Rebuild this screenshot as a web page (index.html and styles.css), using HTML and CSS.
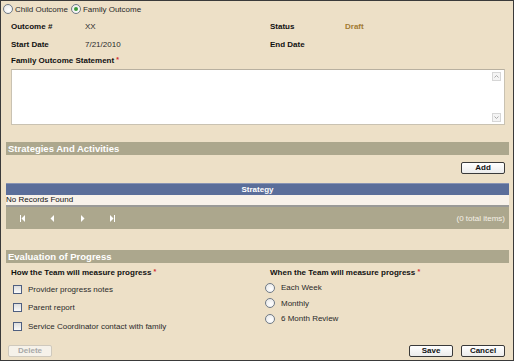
FILE: index.html
```html
<!DOCTYPE html>
<html lang="en">
<head>
  <meta charset="UTF-8" />
  <title>Family Outcome</title>
  <link rel="stylesheet" href="styles.css">
</head>
<body>

<div class="page">
  <div class="type-row">
    <span class="radio"></span><span class="opt">Child Outcome</span>
    <span class="radio on"></span><span class="opt">Family Outcome</span>
  </div>

  <div class="fields">
    <span class="lbl">Outcome #</span><span class="val">XX</span>
    <span class="lbl">Status</span><span class="val draft">Draft</span>
    <span class="lbl">Start Date</span><span class="val">7/21/2010</span>
    <span class="lbl">End Date</span><span class="val"></span>
  </div>

  <div class="lbl stmt">Family Outcome Statement <span class="req">*</span></div>
  <div class="textarea">
    <div class="scroll">
      <svg class="arrow" width="9" height="9" viewBox="0 0 9 9"><rect x="0.5" y="0.5" width="8" height="8" fill="#f4f4f4" stroke="#d6d6d6"/><path d="M2.5 5.5 L4.5 3.5 L6.5 5.5" fill="none" stroke="#aaa"/></svg>
      <svg class="arrow" width="9" height="9" viewBox="0 0 9 9"><rect x="0.5" y="0.5" width="8" height="8" fill="#f4f4f4" stroke="#d6d6d6"/><path d="M2.5 3.5 L4.5 5.5 L6.5 3.5" fill="none" stroke="#aaa"/></svg>
    </div>
  </div>

  <div class="section-head">Strategies And Activities</div>
  <div class="add-row"><button class="btn">Add</button></div>

  <div class="grid">
    <div class="grid-head">Strategy</div>
    <div class="grid-row">No Records Found</div>
    <div class="pager">
      <div class="pager-btns">
        <svg width="7" height="7" viewBox="0 0 7 7"><rect x="1" y="0" width="1" height="7" fill="#fff"/><path d="M6 0 L2.5 3.5 L6 7 Z" fill="#fff"/></svg>
        <svg width="7" height="7" viewBox="0 0 7 7"><path d="M5 0 L1.5 3.5 L5 7 Z" fill="#fff"/></svg>
        <svg width="7" height="7" viewBox="0 0 7 7"><path d="M2 0 L5.5 3.5 L2 7 Z" fill="#fff"/></svg>
        <svg width="7" height="7" viewBox="0 0 7 7"><path d="M1 0 L4.5 3.5 L1 7 Z" fill="#fff"/><rect x="5" y="0" width="1" height="7" fill="#fff"/></svg>
      </div>
      <span class="total">(0 total items)</span>
    </div>
  </div>

  <div class="section-head eval">Evaluation of Progress</div>

  <div class="measure">
    <div class="col">
      <div class="lbl">How the Team will measure progress <span class="req">*</span></div>
      <ul class="checks">
        <li><span class="box"></span>Provider progress notes</li>
        <li><span class="box"></span>Parent report</li>
        <li><span class="box"></span>Service Coordinator contact with family</li>
      </ul>
    </div>
    <div class="col">
      <div class="lbl">When the Team will measure progress <span class="req">*</span></div>
      <ul class="radios">
        <li><span class="radio"></span>Each Week</li>
        <li><span class="radio"></span>Monthly</li>
        <li><span class="radio"></span>6 Month Review</li>
      </ul>
    </div>
  </div>

  <div class="footer">
    <button class="btn" disabled>Delete</button>
    <div class="right">
      <button class="btn">Save</button>
      <button class="btn">Cancel</button>
    </div>
  </div>
</div>

</body>
</html>
```

FILE: styles.css
```css
body {
  margin: 0;
  font-family: 'Liberation Sans', Arial, sans-serif;
  font-size: 8px;
  color: #2a2a2a;
}
.page {
  width: 514px;
  height: 361px;
  box-sizing: border-box;
  border: 1px solid #3a3a3a;
  background: #ede0c7;
  padding: 0 4px;
  overflow: hidden;
}
.type-row {
  display: flex;
  align-items: center;
  height: 16px;
  margin-left: -2px;
}
.opt {
  margin: 0 3px 0 2px;
}
.radio {
  display: inline-block;
  width: 8px;
  height: 8px;
  border: 1px solid #6f7a86;
  border-radius: 50%;
  background: radial-gradient(circle at 60% 65%, #ffffff, #e4e4e4);
  position: relative;
  flex: none;
}
.radio.on::after {
  content: '';
  position: absolute;
  left: 2px;
  top: 2px;
  width: 4px;
  height: 4px;
  border-radius: 50%;
  background: #3a9a3a;
}
.fields {
  display: grid;
  grid-template-columns: 74px 185px 75px 1fr;
  grid-auto-rows: 18px;
  align-items: center;
  padding-left: 6px;
}
.lbl {
  font-weight: bold;
  color: #111;
}
.val.draft {
  color: #a27b32;
  font-weight: bold;
}
.stmt {
  margin: 3px 0 0 6px;
  height: 13px;
}
.req {
  color: #d03030;
  font-size: 7px;
  vertical-align: top;
}
.textarea {
  margin: 0 4px 0 6px;
  height: 54px;
  background: #fff;
  border: 1px solid #c9c2b2;
  border-top-color: #b8b0a0;
  display: flex;
  justify-content: flex-end;
}
.scroll {
  width: 9px;
  margin: 2px 3px 2px 0;
  display: flex;
  flex-direction: column;
  justify-content: space-between;
}
.arrow {
  display: block;
}
.section-head {
  margin: 17px 0 0 1px;
  height: 13px;
  line-height: 13px;
  background: #aca78d;
  color: #fff;
  font-weight: bold;
  font-size: 9.5px;
  padding-left: 2px;
}
.add-row {
  display: flex;
  justify-content: flex-end;
  padding: 7px 4px 0 0;
  height: 14px;
}
.btn {
  font-family: 'Liberation Sans', Arial, sans-serif;
  font-size: 8px;
  font-weight: bold;
  width: 44px;
  height: 12px;
  padding: 0;
  line-height: 10px;
  border: 1px solid #3a3a3a;
  border-radius: 2px;
  background: linear-gradient(#ffffff, #ececec);
  color: #111;
}
.btn:disabled {
  border-color: #cfc9bd;
  color: #a8a8a8;
  background: #f6f2ea;
}
.grid {
  margin: 7px 0 0 1px;
}
.grid-head {
  height: 11px;
  line-height: 11px;
  background: #5b6e9a;
  border-top: 1px solid #8894b4;
  color: #fff;
  font-weight: bold;
  text-align: center;
}
.grid-row {
  height: 10px;
  line-height: 10px;
  background: #f8f2ea;
  color: #111;
  border-bottom: 2px solid #9a9a98;
}
.pager {
  height: 22px;
  background: #aca78d;
  display: flex;
  align-items: center;
  justify-content: space-between;
  padding: 0 4px 0 13px;
}
.pager-btns {
  display: flex;
  gap: 23px;
}
.total {
  color: #f5f0e6;
}
.eval {
  margin-top: 21px;
}
.measure {
  display: flex;
  padding-left: 6px;
}
.measure .col {
  flex: 0 0 259px;
}
.measure .lbl {
  margin-top: 5px;
  height: 11px;
}
.checks, .radios {
  list-style: none;
  margin: 0;
  padding: 0;
}
.checks li {
  display: flex;
  align-items: center;
  height: 18.5px;
  gap: 6px;
  margin-left: 2px;
}
.checks li:first-child {
  margin-top: 1px;
}
.box {
  width: 7px;
  height: 7px;
  border: 1px solid #4f5f80;
  background: linear-gradient(#dedede, #fafafa);
}
.radios {
  margin-top: 1px;
}
.radios li {
  display: flex;
  align-items: center;
  height: 15.5px;
  gap: 6px;
  margin-left: -5px;
}
.footer {
  display: flex;
  justify-content: space-between;
  margin-top: 9px;
  padding: 0 4px 0 3px;
}
.footer .right {
  display: flex;
  gap: 8px;
}
```
